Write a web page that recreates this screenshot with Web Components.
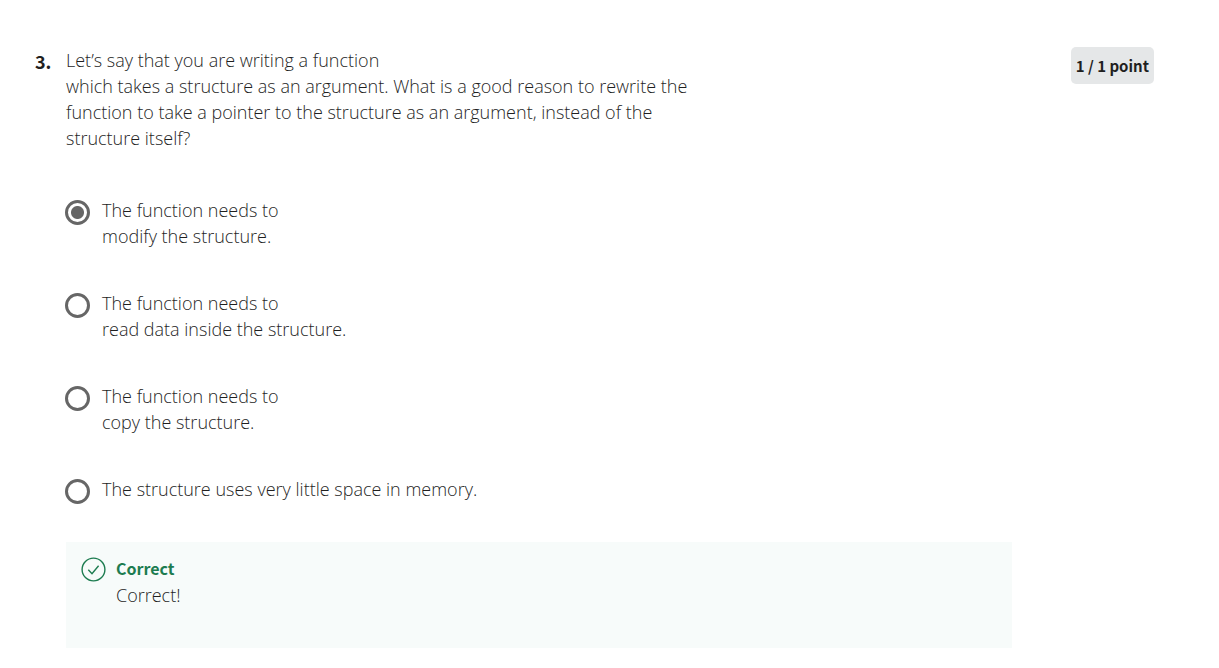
<!DOCTYPE html>
<html lang="en">
<head>
<meta charset="utf-8">
<meta name="viewport" content="width=device-width, initial-scale=1">
<title>Quiz question</title>
<style>
  body {
    margin: 0;
    background: #fff;
    color: #1f1f1f;
    font: 300 18px/26px "Open Sans", "Noto Sans", sans-serif;
    --strong-font: "Noto Sans CJK SC", "Open Sans", sans-serif;
  }
</style>
</head>
<body>
<quiz-question number="3.">
  <span slot="prompt">Let’s say that you are writing a function<br>which takes a structure as an argument. What is a good reason to rewrite the function to take a pointer to the structure as an argument, instead of the structure itself?</span>
  <score-badge slot="score">1 / 1 point</score-badge>
  <quiz-option checked>The function needs to<br>modify the structure.</quiz-option>
  <quiz-option>The function needs to<br>read data inside the structure.</quiz-option>
  <quiz-option>The function needs to<br>copy the structure.</quiz-option>
  <quiz-option>The structure uses very little space in memory.</quiz-option>
  <quiz-feedback slot="feedback" heading="Correct">Correct!</quiz-feedback>
</quiz-question>

<script>
  const attach = (host, html) => {
    const template = document.createElement('template');
    template.innerHTML = html;
    host.attachShadow({ mode: 'open' }).append(template.content.cloneNode(true));
  };

  class QuizQuestion extends HTMLElement {
    constructor() {
      super();
      attach(this, `
        <style>
          :host { display: grid; grid-template-columns: 31px minmax(0, 1fr) auto; padding: 47px 65px 20px 35px; }
          .number { font: 700 18px/28px var(--strong-font); color: #1f1f1f; }
          .prompt { margin: 0; max-width: 640px; }
          .answers { grid-column: 2; display: grid; gap: 41px; margin-top: 46px; }
          .feedback { grid-column: 2; margin: 38px 59px 0 0; }
        </style>
        <div class="number"></div>
        <p class="prompt"><slot name="prompt"></slot></p>
        <div class="score"><slot name="score"></slot></div>
        <div class="answers" role="radiogroup" aria-label="Answers"><slot></slot></div>
        <div class="feedback"><slot name="feedback"></slot></div>`);
    }
    connectedCallback() {
      this.shadowRoot.querySelector('.number').textContent = this.getAttribute('number');
      this.addEventListener('change-option', (event) => {
        for (const option of this.querySelectorAll('quiz-option')) {
          option.toggleAttribute('checked', option === event.target);
        }
      });
    }
  }

  class ScoreBadge extends HTMLElement {
    constructor() {
      super();
      attach(this, `
        <style>
          :host { display: block; padding: 0 5px; border-radius: 5px; background: #e5e7e8; color: #1f1f1f;
            font: 700 15px/37px var(--strong-font); white-space: nowrap; }
        </style>
        <slot></slot>`);
    }
  }

  class QuizOption extends HTMLElement {
    static observedAttributes = ['checked'];
    constructor() {
      super();
      attach(this, `
        <style>
          :host { display: block; }
          label { display: flex; align-items: flex-start; gap: 12px; cursor: pointer; }
          input { appearance: none; flex: none; box-sizing: border-box; width: 25px; height: 25px; margin: 3px 0 0 -1px;
            border: 3px solid #666; border-radius: 50%; background: #fff; }
          input:checked { background: radial-gradient(circle, #666 6px, #fff 7px); }
        </style>
        <label><input type="radio"><span><slot></slot></span></label>`);
      this.input = this.shadowRoot.querySelector('input');
      this.input.addEventListener('change', () => {
        this.dispatchEvent(new CustomEvent('change-option', { bubbles: true }));
      });
    }
    attributeChangedCallback() {
      this.input.checked = this.hasAttribute('checked');
    }
  }

  class QuizFeedback extends HTMLElement {
    constructor() {
      super();
      attach(this, `
        <style>
          :host { display: flex; align-items: flex-start; gap: 10px; padding: 14px 15px 40px 14px; background: #f7fbfa; }
          svg { flex: none; width: 26px; height: 26px; fill: none; stroke: #1d7c50; }
          strong { display: block; height: 26px; font: 700 16px/24px var(--strong-font); color: #1d7c50; }
        </style>
        <svg viewBox="0 0 26 26" aria-hidden="true">
          <circle cx="13.5" cy="13.5" r="11.4" stroke-width="1.4"/>
          <path d="M8.3 13.8l3.7 3.9 6.6-8" stroke-width="1.4"/>
        </svg>
        <div><strong></strong><slot></slot></div>`);
    }
    connectedCallback() {
      this.shadowRoot.querySelector('strong').textContent = this.getAttribute('heading');
    }
  }

  customElements.define('quiz-question', QuizQuestion);
  customElements.define('score-badge', ScoreBadge);
  customElements.define('quiz-option', QuizOption);
  customElements.define('quiz-feedback', QuizFeedback);
</script>
</body>
</html>
